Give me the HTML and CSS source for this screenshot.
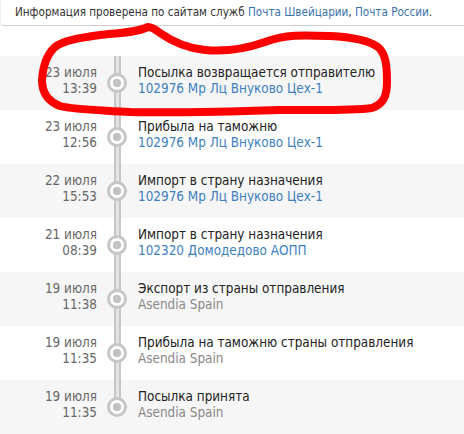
FILE: index.html
```html
<!DOCTYPE html>
<html lang="ru">
<head>
    <meta charset="UTF-8">
    <title>Отслеживание посылки</title>
    <link rel="stylesheet" href="styles.css">
</head>
<body>
    <div class="page">
        <div class="source">
            Информация проверена по сайтам служб <a href="#">Почта Швейцарии</a>, <a href="#">Почта России</a>.
        </div>

        <ul class="history">
            <li class="step">
                <div class="when">23 июля<br>13:39</div>
                <div class="mark"><span class="dot"></span></div>
                <div class="what">Посылка возвращается отправителю<br><span class="place">102976 Мр Лц Внуково Цех-1</span></div>
            </li>
            <li class="step">
                <div class="when">23 июля<br>12:56</div>
                <div class="mark"><span class="dot"></span></div>
                <div class="what">Прибыла на таможню<br><span class="place">102976 Мр Лц Внуково Цех-1</span></div>
            </li>
            <li class="step">
                <div class="when">22 июля<br>15:53</div>
                <div class="mark"><span class="dot"></span></div>
                <div class="what">Импорт в страну назначения<br><span class="place">102976 Мр Лц Внуково Цех-1</span></div>
            </li>
            <li class="step">
                <div class="when">21 июля<br>08:39</div>
                <div class="mark"><span class="dot"></span></div>
                <div class="what">Импорт в страну назначения<br><span class="place">102320 Домодедово АОПП</span></div>
            </li>
            <li class="step">
                <div class="when">19 июля<br>11:38</div>
                <div class="mark"><span class="dot"></span></div>
                <div class="what">Экспорт из страны отправления<br><span class="place foreign">Asendia Spain</span></div>
            </li>
            <li class="step">
                <div class="when">19 июля<br>11:35</div>
                <div class="mark"><span class="dot"></span></div>
                <div class="what">Прибыла на таможню страны отправления<br><span class="place foreign">Asendia Spain</span></div>
            </li>
            <li class="step last">
                <div class="when">19 июля<br>11:35</div>
                <div class="mark"><span class="dot"></span></div>
                <div class="what">Посылка принята<br><span class="place foreign">Asendia Spain</span></div>
            </li>
        </ul>

        <!-- hand drawn marker round the first step -->
        <svg class="scribble" width="464" height="434" viewBox="0 0 464 434">
            <path d="M148 27 C135 33 118 33 100 35 C80 38 64 40 55 47 C46 55 43 66 42 80 C42 92 47 101 60 106 C75 110 100 110 130 112 C170 113 220 112 280 110 C320 110 350 111 372 108 C384 104 387 95 387 82 C387 66 386 54 378 47 C368 40 352 37 330 36 C305 35 285 34 265 42 C245 49 225 52 205 50 C185 48 170 40 160 33 C155 29 152 27 148 27 Z"/>
        </svg>
    </div>
</body>
</html>
```

FILE: styles.css
```css
body {
    margin: 0;
    padding: 0;
    font-family: "DejaVu Sans Condensed", "DejaVu Sans", sans-serif;
    font-size: 13.4px;
    color: #222;
    background: #fff;
}

.page {
    position: relative;
    width: 464px;
    height: 434px;
    overflow: hidden;
}

.source {
    height: 25px;
    line-height: 24px;
    padding-left: 14px;
    font-size: 11.6px;
    white-space: nowrap;
    color: #333;
    border-bottom: 1px solid #cfcfcf;
    border-left: 1px solid #eee;
    border-bottom-left-radius: 3px;
}

.source a {
    color: #3a72ad;
    text-decoration: none;
}

.history {
    list-style: none;
    margin: 30px 0 0;
    padding: 0;
}

.step {
    display: flex;
    height: 54px;
    background: #f6f6f6;
}

.step:nth-child(even) {
    background: #fff;
}

.when {
    width: 97px;
    padding-top: 9px;
    line-height: 16px;
    text-align: right;
    color: #666;
}

.mark {
    position: relative;
    width: 41px;
    flex-shrink: 0;
}

.mark::before {
    content: "";
    position: absolute;
    left: 17px;
    top: 0;
    bottom: 0;
    width: 7px;
    background: linear-gradient(to right, #c6c6c6 0 2px, #e4e4e4 2px 5px, #c6c6c6 5px);
}

.last .mark::before {
    bottom: 27px;
}

.dot {
    position: absolute;
    left: 10px;
    top: 17px;
    width: 14px;
    height: 14px;
    border: 3px solid #c6c6c6;
    border-radius: 50%;
    background: radial-gradient(circle, #c2c2c2 0 4px, #fff 4.5px);
}

.what {
    padding-top: 9px;
    line-height: 16px;
    white-space: nowrap;
}

.place {
    color: #3d7fc1;
}

.place.foreign {
    color: #888;
}

.scribble {
    position: absolute;
    left: 0;
    top: 0;
    pointer-events: none;
}

.scribble path {
    fill: none;
    stroke: #ff0000;
    stroke-width: 8;
    stroke-linejoin: round;
    stroke-linecap: round;
}
```
